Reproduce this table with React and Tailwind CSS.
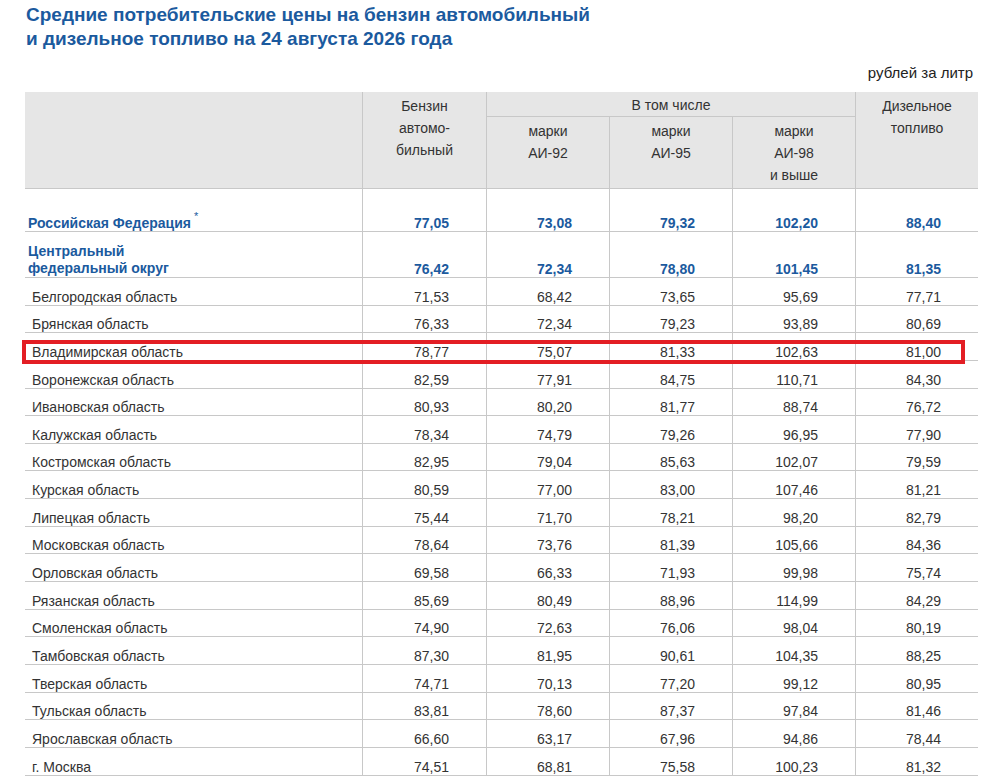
import React from 'react';

const rows = [
  ['Белгородская область', '71,53', '68,42', '73,65', '95,69', '77,71'],
  ['Брянская область', '76,33', '72,34', '79,23', '93,89', '80,69'],
  ['Владимирская область', '78,77', '75,07', '81,33', '102,63', '81,00'],
  ['Воронежская область', '82,59', '77,91', '84,75', '110,71', '84,30'],
  ['Ивановская область', '80,93', '80,20', '81,77', '88,74', '76,72'],
  ['Калужская область', '78,34', '74,79', '79,26', '96,95', '77,90'],
  ['Костромская область', '82,95', '79,04', '85,63', '102,07', '79,59'],
  ['Курская область', '80,59', '77,00', '83,00', '107,46', '81,21'],
  ['Липецкая область', '75,44', '71,70', '78,21', '98,20', '82,79'],
  ['Московская область', '78,64', '73,76', '81,39', '105,66', '84,36'],
  ['Орловская область', '69,58', '66,33', '71,93', '99,98', '75,74'],
  ['Рязанская область', '85,69', '80,49', '88,96', '114,99', '84,29'],
  ['Смоленская область', '74,90', '72,63', '76,06', '98,04', '80,19'],
  ['Тамбовская область', '87,30', '81,95', '90,61', '104,35', '88,25'],
  ['Тверская область', '74,71', '70,13', '77,20', '99,12', '80,95'],
  ['Тульская область', '83,81', '78,60', '87,37', '97,84', '81,46'],
  ['Ярославская область', '66,60', '63,17', '67,96', '94,86', '78,44'],
  ['г. Москва', '74,51', '68,81', '75,58', '100,23', '81,32'],
];

const cols = 'grid grid-cols-[337px_124px_123px_123px_123px_123px]';

const Values = ({ values, bold }) =>
  values.map((v, i) => (
    <div
      key={i}
      className={`flex items-end justify-end border-l border-[#c8c8c8] pr-[37px] leading-4 ${bold ? 'font-bold text-[#1b5a9e]' : ''}`}
    >
      {v}
    </div>
  ));

export default function App() {
  return (
    <div className="bg-white min-h-screen pl-[25px] pr-[4px] pt-[3px] text-[14px] text-[#333]" style={{ fontFamily: '"Liberation Sans", Arial, sans-serif' }}>
      <h1 className="pl-[1px] text-[19px] leading-6 font-bold text-[#1b5a9e]">
        Средние потребительские цены на бензин автомобильный
        <br />
        и дизельное топливо на 24 августа 2026 года
      </h1>

      <p className="mt-[12px] pr-[5px] text-right text-[15px] leading-5 text-[#222]">рублей за литр</p>

      <div className="relative mt-[9px]">
        {/* header */}
        <div className={`${cols} grid-rows-[25px_71px] h-[97px] bg-[#e6e6e6] border-b border-[#c8c8c8] leading-[22px] text-center`}>
          <div className="row-span-2"></div>
          <div className="row-span-2 border-l border-[#c8c8c8] pt-[3px]">
            Бензин
            <br />
            автомо-
            <br />
            бильный
          </div>
          <div className="col-span-3 border-l border-b border-[#c8c8c8] pt-[2px]">В том числе</div>
          <div className="row-span-2 border-l border-[#c8c8c8] pt-[3px]">
            Дизельное
            <br />
            топливо
          </div>
          <div className="border-l border-[#c8c8c8] pt-[3px]">
            марки
            <br />
            АИ-92
          </div>
          <div className="border-l border-[#c8c8c8] pt-[3px]">
            марки
            <br />
            АИ-95
          </div>
          <div className="border-l border-[#c8c8c8] pt-[3px]">
            марки
            <br />
            АИ-98
            <br />и выше
          </div>
        </div>

        {/* federation */}
        <div className={`${cols} h-[43px] border-b border-[#c8c8c8]`}>
          <div className="flex items-end pl-[3px] leading-4 font-bold text-[#1b5a9e]">
            <span>Российская Федерация</span>
            <sup className="relative -top-[15px] ml-[3px] text-[11px] font-normal">*</sup>
          </div>
          <Values values={['77,05', '73,08', '79,32', '102,20', '88,40']} bold />
        </div>

        {/* district */}
        <div className={`${cols} h-[46px] border-b border-[#c8c8c8]`}>
          <div className="flex items-end pl-[3px] leading-[17px] font-bold text-[#1b5a9e]">
            Центральный
            <br />
            федеральный округ
          </div>
          <Values values={['76,42', '72,34', '78,80', '101,45', '81,35']} bold />
        </div>

        {rows.map(([name, ...vals]) => (
          <div key={name} className={`${cols} h-[27.65px] border-b border-[#c8c8c8]`}>
            <div className="flex items-end pl-[7px] leading-4">{name}</div>
            <Values values={vals} />
          </div>
        ))}

        {/* highlight */}
        <div className="absolute left-[-3px] top-[248px] h-[24px] w-[943px] border-4 border-[#e31e24]"></div>
      </div>
    </div>
  );
}
